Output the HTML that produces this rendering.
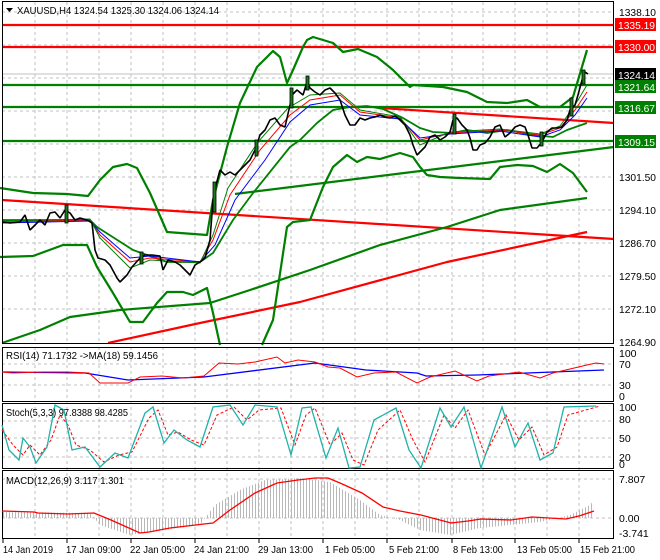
<!DOCTYPE html>
<html><head><meta charset="utf-8"><style>
html,body{margin:0;padding:0;background:#fff;width:660px;height:560px;overflow:hidden}
svg{display:block}
text{font-family:"Liberation Sans",sans-serif;font-size:10.5px;fill:#000}
</style></head><body>
<svg width="660" height="560" viewBox="0 0 660 560" xmlns="http://www.w3.org/2000/svg">
<defs>
<pattern id="hs" width="3" height="10" patternUnits="userSpaceOnUse"><rect x="0" y="0" width="1" height="10" fill="#b8b8b8"/></pattern>
</defs>
<rect width="660" height="560" fill="#fff"/>
<g stroke="#c0c0c0" stroke-dasharray="3,3" stroke-width="1">
<path d="M35 2V343M67 2V343M99 2V343M131 2V343M163 2V343M195 2V343M227 2V343M259 2V343M291 2V343M323 2V343M355 2V343M387 2V343M419 2V343M452 2V343M483 2V343M515 2V343M547 2V343M579 2V343"/>
<path d="M2 12H614M2 45H614M2 78H614M2 111H614M2 144H614M2 177H614M2 210H614M2 243H614M2 276H614M2 309H614"/>
<path d="M35 347V539M67 347V539M99 347V539M131 347V539M163 347V539M195 347V539M227 347V539M259 347V539M291 347V539M323 347V539M355 347V539M387 347V539M419 347V539M452 347V539M483 347V539M515 347V539M547 347V539M579 347V539"/>
<path d="M2 364H614M2 385H614M2 421H614M2 438H614M2 457H614M2 479H614M2 518H614"/>
</g>
<line x1="2" y1="74" x2="614" y2="74" stroke="#c0c0c0"/>
<g stroke-width="2.2">
<line x1="2" y1="25" x2="614" y2="25" stroke="#f00"/>
<line x1="2" y1="47" x2="614" y2="47" stroke="#f00"/>
<line x1="2" y1="85" x2="614" y2="85" stroke="#008000"/>
<line x1="2" y1="107" x2="614" y2="107" stroke="#008000"/>
<line x1="2" y1="141" x2="614" y2="141" stroke="#008000"/>
</g>
<g fill="none" stroke-width="2.2" stroke-linejoin="round">
<polyline stroke="#f00" points="2,200 614,239"/>
<polyline stroke="#f00" points="380,108 614,123"/>
<polyline stroke="#f00" points="108,343 200,323 300,302 447,262 587,232"/>
<polyline stroke="#008000" points="2,343 40,330 70,317 120,310 210,303 250,290 310,270 380,245 447,227 500,210 587,198"/>
<polyline stroke="#008000" points="235,194 614,147"/>
<polyline stroke="#008000" points="0,188 33,193 67,194 88,196 100,180 113,167 127,164 137,168 150,193 167,232 207,235 213,200 227,147 240,103 257,67 273,51 280,57 287,83 293,70 303,47 307,40 313,37 333,43 343,52 358,49 377,57 393,70 410,87 413,85 443,87 467,92 487,102 507,103 527,100 540,107 560,107 573,97 587,50"/>
<polyline stroke="#008000" points="0,257 33,256 63,245 87,245 97,267 113,293 130,322 143,322 157,303 167,292 183,292 193,295 207,288 213,313 220,345"/>
<polyline stroke="#008000" points="262,345 273,320 287,227 293,222 310,220 323,187 333,167 347,155 357,162 367,157 380,159 400,153 413,157 420,167 427,175 440,177 460,178 490,179 500,167 517,165 533,166 547,172 560,164 573,173 587,192"/>
<polyline stroke="#008000" stroke-width="1.8" points="2,220 90,220 97,227 133,250 147,255 167,262 200,262 213,253 233,220 253,193 290,147 300,140 317,123 333,110 350,107 367,106 383,109 403,118 420,128 433,132 453,133 467,130 487,133 507,130 533,135 553,137 567,130 587,123"/>
</g>
<g fill="none" stroke-width="1">
<polyline stroke="#f00" points="2,222 90,220 100,235 130,262 150,258 200,262 213,240 230,195 260,150 290,115 310,100 340,95 360,112 400,118 420,140 450,133 500,130 540,135 560,128 575,110 587,92"/>
<polyline stroke="#00f" points="2,223 90,221 100,232 130,258 150,256 200,262 215,245 235,200 265,160 290,122 310,105 340,100 360,115 400,119 420,138 450,134 500,131 540,137 560,130 575,115 587,98"/>
<polyline stroke="#008000" points="2,221 90,219 100,238 130,268 150,260 200,263 213,235 228,188 258,142 288,108 310,95 340,93 360,110 400,117 420,145 450,132 500,129 540,134 560,126 575,105 587,85"/>
</g>
<polyline fill="none" stroke="#000" stroke-width="1.6" stroke-linejoin="bevel" points="2,222 10,223 20,222 25,215 30,230 40,220 45,225 50,213 55,212 60,218 65,210 70,213 75,220 80,218 87,220 92,223 95,250 98,258 105,260 110,265 117,278 120,282 127,275 132,267 140,258 145,255 152,255 160,256 163,270 168,260 175,262 180,265 185,270 190,275 195,265 200,262 205,258 210,240 213,200 216,185 220,170 225,175 230,172 235,175 240,170 245,165 250,160 255,150 260,135 265,130 270,120 275,118 280,125 285,127 290,105 292,95 297,90 303,95 307,82 310,88 315,92 320,95 325,90 330,88 335,93 340,100 345,115 350,125 355,125 360,118 365,120 370,118 375,117 380,115 385,117 390,118 395,116 400,120 405,125 410,135 413,145 417,155 420,152 425,147 430,137 435,135 440,140 445,137 450,132 453,120 457,118 462,125 467,130 470,138 473,150 477,150 480,145 485,143 490,137 495,127 500,125 505,137 510,133 515,127 520,125 525,127 528,135 532,148 537,148 542,142 547,132 552,128 557,128 562,127 567,120 570,110 575,105 578,95 582,80 585,72 588,74"/>
<g fill="#1a7a1a" stroke="#000" stroke-width="0.8">
<rect x="65" y="205" width="3" height="18"/><rect x="213" y="182" width="3" height="30"/><rect x="290" y="88" width="3" height="20"/><rect x="306" y="76" width="3" height="14"/><rect x="453" y="114" width="3" height="20"/><rect x="570" y="98" width="3" height="18"/><rect x="582" y="70" width="3" height="14"/><rect x="140" y="252" width="3" height="12"/><rect x="255" y="140" width="3" height="16"/><rect x="540" y="132" width="3" height="14"/>
</g>
<g fill="none" stroke="#000" stroke-width="1">
<rect x="2.5" y="1.5" width="611" height="342"/>
<rect x="2.5" y="347.5" width="611" height="54"/>
<rect x="2.5" y="403.5" width="611" height="65"/>
<rect x="2.5" y="470.5" width="611" height="68"/>
</g>
<path d="M6 8h7l-3.5 4z" fill="#000"/>
<text x="17" y="14" textLength="202" lengthAdjust="spacingAndGlyphs">XAUUSD,H4  1324.54 1325.30 1324.06 1324.14</text>
<g>
<text x="619" y="16" textLength="37" lengthAdjust="spacingAndGlyphs">1338.10</text>
<text x="619" y="181" textLength="37" lengthAdjust="spacingAndGlyphs">1301.50</text>
<text x="619" y="214" textLength="37" lengthAdjust="spacingAndGlyphs">1294.10</text>
<text x="619" y="247" textLength="37" lengthAdjust="spacingAndGlyphs">1286.70</text>
<text x="619" y="280" textLength="37" lengthAdjust="spacingAndGlyphs">1279.50</text>
<text x="619" y="313" textLength="37" lengthAdjust="spacingAndGlyphs">1272.10</text>
<text x="619" y="346" textLength="37" lengthAdjust="spacingAndGlyphs">1264.90</text>
</g>
<rect x="615" y="18" width="41" height="13" fill="#f00"/><text x="618" y="29" textLength="37" lengthAdjust="spacingAndGlyphs" style="fill:#fff">1335.19</text>
<rect x="615" y="40" width="41" height="13" fill="#f00"/><text x="618" y="51" textLength="37" lengthAdjust="spacingAndGlyphs" style="fill:#fff">1330.00</text>
<rect x="615" y="68" width="41" height="13" fill="#000"/><text x="618" y="79" textLength="37" lengthAdjust="spacingAndGlyphs" style="fill:#fff">1324.14</text>
<rect x="615" y="80" width="41" height="13" fill="#008000"/><text x="618" y="91" textLength="37" lengthAdjust="spacingAndGlyphs" style="fill:#fff">1321.64</text>
<rect x="615" y="101" width="41" height="13" fill="#008000"/><text x="618" y="112" textLength="37" lengthAdjust="spacingAndGlyphs" style="fill:#fff">1316.67</text>
<rect x="615" y="135" width="41" height="13" fill="#008000"/><text x="618" y="146" textLength="37" lengthAdjust="spacingAndGlyphs" style="fill:#fff">1309.15</text>
<text x="6" y="359" textLength="152" lengthAdjust="spacingAndGlyphs">RSI(14) 71.1732  -&gt;MA(18) 59.1456</text>
<polyline fill="none" stroke="#00f" stroke-width="1.3" points="2,372 85,373 128,380 204,377 315,363 366,370 417,373 426,376 477,375 604,370"/>
<polyline fill="none" stroke="#f00" stroke-width="1" points="2,372 13,373 43,372 68,372 89,373 100,383 128,383 140,377 162,376 183,378 204,376 219,363 238,364 255,362 277,357 285,363 298,360 315,362 328,367 340,368 357,377 374,373 396,372 417,383 430,377 455,371 477,381 489,376 519,372 540,378 553,373 587,365 596,363 604,364"/>
<text x="619" y="357">100</text><text x="619" y="368">70</text><text x="619" y="389">30</text><text x="619" y="400">0</text>
<polyline fill="none" stroke="#f00" stroke-width="1" stroke-dasharray="3,2" points="2,430 13,445 23,455 30,445 40,455 51,440 60,415 68,425 76,445 90,450 104,462 119,455 132,452 149,418 158,410 168,435 178,432 191,440 204,445 217,415 234,407 247,420 259,410 281,408 295,445 306,415 315,408 330,445 342,433 353,460 364,465 378,430 400,410 413,440 425,462 444,415 455,428 468,410 485,455 506,415 519,440 532,427 544,455 557,447 568,415 600,406"/>
<polyline fill="none" stroke="#20b2aa" stroke-width="1.3" points="2,425 9,450 19,460 23,438 30,447 36,463 47,447 55,405 64,410 72,450 85,447 100,467 115,453 128,458 145,413 153,407 164,443 174,430 187,440 200,447 213,407 230,405 243,425 255,405 277,407 291,455 302,408 311,407 326,458 338,428 349,468 360,467 374,420 396,408 409,450 421,468 440,408 451,427 464,407 481,468 502,407 515,447 528,423 540,460 553,453 564,407 596,406"/>
<text x="6" y="416" textLength="122" lengthAdjust="spacingAndGlyphs">Stoch(5,3,3) 97.8388 98.4285</text>
<text x="619" y="411">100</text><text x="619" y="423">80</text><text x="619" y="442">50</text><text x="619" y="461">20</text><text x="619" y="468">0</text>
<polygon fill="url(#hs)" points="2,512 90,513 100,525 130,535 200,525 215,505 240,490 265,480 300,478 330,482 360,500 380,515 400,520 420,530 450,535 480,528 540,522 570,515 590,505 594,500 594,518 2,518"/>
<polyline fill="none" stroke="#f00" stroke-width="1.3" points="2,511 34,512 38,513 68,514 94,513 111,520 140,533 149,532 170,528 204,524 213,523 230,510 255,493 277,483 298,480 315,478 328,478 340,483 362,493 383,507 400,511 421,515 451,523 468,521 481,519 511,520 532,517 566,519 579,516 594,511"/>
<text x="6" y="484" textLength="118" lengthAdjust="spacingAndGlyphs">MACD(12,26,9) 3.117 1.301</text>
<text x="619" y="483">7.807</text><text x="619" y="522">0.00</text><text x="619" y="537">-3.741</text>
<g stroke="#000"><path d="M3 539v4M67 539v4M131 539v4M195 539v4M259 539v4M323 539v4M387 539v4M452 539v4M515 539v4M579 539v4"/></g>
<g>
<text x="3" y="553" textLength="50" lengthAdjust="spacingAndGlyphs">14 Jan 2019</text>
<text x="66" y="553" textLength="55" lengthAdjust="spacingAndGlyphs">17 Jan 09:00</text>
<text x="130" y="553" textLength="55" lengthAdjust="spacingAndGlyphs">22 Jan 05:00</text>
<text x="194" y="553" textLength="55" lengthAdjust="spacingAndGlyphs">24 Jan 21:00</text>
<text x="258" y="553" textLength="55" lengthAdjust="spacingAndGlyphs">29 Jan 13:00</text>
<text x="325" y="553" textLength="50" lengthAdjust="spacingAndGlyphs">1 Feb 05:00</text>
<text x="389" y="553" textLength="50" lengthAdjust="spacingAndGlyphs">5 Feb 21:00</text>
<text x="453" y="553" textLength="50" lengthAdjust="spacingAndGlyphs">8 Feb 13:00</text>
<text x="517" y="553" textLength="55" lengthAdjust="spacingAndGlyphs">13 Feb 05:00</text>
<text x="580" y="553" textLength="55" lengthAdjust="spacingAndGlyphs">15 Feb 21:00</text>
</g>
</svg>
</body></html>
